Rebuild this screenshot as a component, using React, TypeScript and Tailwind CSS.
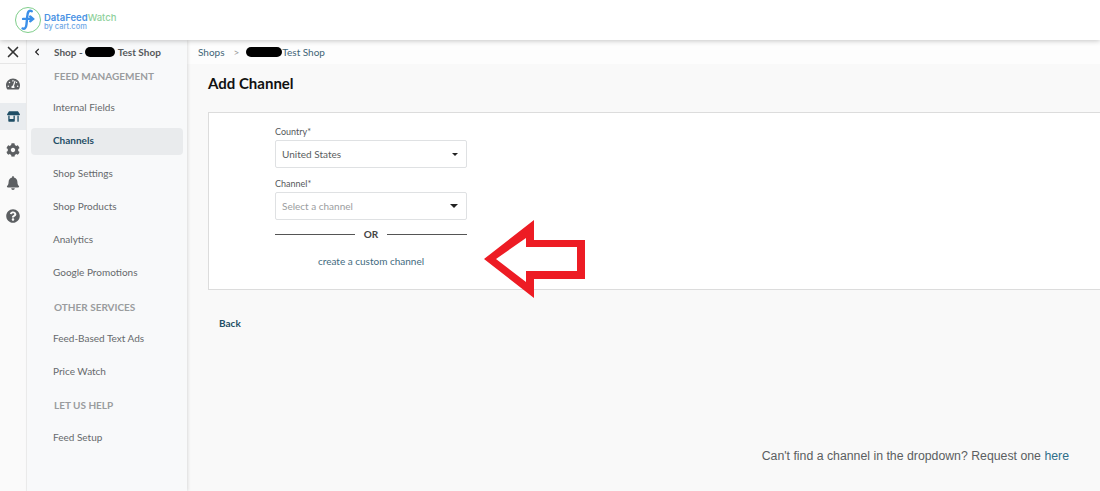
import { FaBell, FaChevronLeft, FaCog, FaQuestionCircle, FaStoreAlt, FaTachometerAlt } from 'react-icons/fa';
import { LuX } from 'react-icons/lu';

const Logo = () => (
  <div className="flex items-center gap-[3px] pl-[15px]">
    <div className="relative w-[26px] h-[26px] rounded-full border border-[#7fce8b] flex items-center justify-center bg-white">
      <svg width="18" height="24" viewBox="0 0 16 22" fill="none" stroke="#3b8fe8" strokeWidth="2.2" strokeLinecap="round">
        <path d="M11.5 3 C8.5 1.5 7.5 4 7.3 8 L6.6 15 C6.3 18.5 4.8 19.5 3 18.7" />
        <path d="M3.5 10 H12" />
        <path d="M10 7.8 L12.6 10 L10 12.2" />
      </svg>
    </div>
    <div className="flex flex-col mt-[3px] font-['Inter',sans-serif] leading-none">
      <span className="text-[9.5px] font-semibold leading-[10px]">
        <span className="text-[#4b93e4]">DataFeed</span>
        <span className="text-[#8fd19c] font-medium">Watch</span>
      </span>
      <span className="text-[7.5px] font-medium leading-[8px] text-[#6fa8e6]">by cart.com</span>
    </div>
  </div>
);

const RailIcon = ({ active, children }: { active?: boolean; children: React.ReactNode }) => (
  <div className="h-[33px] flex items-center">
    <div className={`w-full h-[27px] flex items-center justify-center ${active ? 'bg-[#e9ecef] text-[#1f4e66]' : 'text-[#5c5f62]'}`}>
      {children}
    </div>
  </div>
);

const NavItem = ({ label, active, h = 'h-[33px]' }: { label: string; active?: boolean; h?: string }) => (
  <div
    className={`${h} mx-[4px] pl-[22px] flex items-center text-[10px] rounded ${
      active ? 'bg-[#e9ebed] font-bold text-[#1f4e66] pb-[3px]' : 'text-[#66696c]'
    }`}
  >
    {label}
  </div>
);

const SectionTitle = ({ label, className }: { label: string; className: string }) => (
  <div className={`pl-[27px] flex items-center text-[10px] font-bold text-[#9a9c9e] ${className}`}>{label}</div>
);

const Caret = ({ big }: { big?: boolean }) => (
  <span
    className={`w-0 h-0 border-x-transparent border-t-[#222] ${
      big ? 'border-x-[4px] border-t-[4px]' : 'border-x-[3.5px] border-t-[3.5px]'
    }`}
  />
);

const Select = ({ label, value, placeholder }: { label: string; value: string; placeholder?: boolean }) => (
  <div>
    <div className="text-[9px] leading-[12px] text-[#55585b]">{label}</div>
    <div className="mt-[2px] h-[28px] border border-[#dfe1e3] rounded-[2px] bg-white flex items-center justify-between pl-[6px] pr-[8px]">
      <span className={`text-[10px] ${placeholder ? 'text-[#9b9da0]' : 'text-[#5a5d60]'}`}>{value}</span>
      <Caret big={placeholder} />
    </div>
  </div>
);

const RedArrow = () => (
  <svg className="absolute left-[275px] top-[107px]" width="102" height="80" viewBox="0 0 102 80">
    <path
      fillRule="evenodd"
      fill="#ed1c24"
      d="M0 39 L50 0 L50 20 L101 20 L101 59 L50 59 L50 78 Z M12 39 L42 62 L42 51 L93 51 L93 27 L42 27 L42 18 Z"
    />
  </svg>
);

export default function App() {
  return (
    <div className="w-[1100px] h-[491px] overflow-hidden flex flex-col bg-[#f9f9f9] font-['Lato',sans-serif]">
      {/* top bar */}
      <div className="h-[40px] shrink-0 bg-white flex items-center shadow-[0_1px_5px_rgba(0,0,0,0.22)] relative z-20">
        <Logo />
      </div>

      <div className="flex flex-1 min-h-0">
        {/* icon rail */}
        <div className="w-[27px] shrink-0 bg-[#fafafa] flex flex-col border-r border-[#efefef]">
          <div className="h-[24px] flex items-center justify-center text-[#333] border-b border-[#e6e6e6]">
            <LuX size={18} strokeWidth={2.2} />
          </div>
          <div className="h-[3px]" />
          <RailIcon><FaTachometerAlt size={14} /></RailIcon>
          <RailIcon active><FaStoreAlt size={13} /></RailIcon>
          <RailIcon><FaCog size={14} /></RailIcon>
          <RailIcon><FaBell size={14} /></RailIcon>
          <RailIcon><FaQuestionCircle size={14} /></RailIcon>
        </div>

        {/* shop menu */}
        <div className="w-[160px] shrink-0 bg-[#f8f9fa] shadow-[1px_0_3px_rgba(0,0,0,0.12)] relative z-10">
          <div className="h-[24px] flex items-center text-[10px] font-bold text-[#55585b]">
            <FaChevronLeft size={8} className="ml-[6px] text-[#222]" />
            <span className="ml-[13px]">Shop -</span>
            <span className="ml-[2px] w-[30px] h-[10px] rounded-full bg-black" />
            <span className="ml-[3px]">Test Shop</span>
          </div>
          <SectionTitle label="FEED MANAGEMENT" className="h-[24px]" />
          <NavItem label="Internal Fields" h="h-[38px]" />
          <div className="h-[2px]" />
          <NavItem label="Channels" active h="h-[27px]" />
          <div className="h-[2px]" />
          <NavItem label="Shop Settings" />
          <NavItem label="Shop Products" />
          <NavItem label="Analytics" />
          <NavItem label="Google Promotions" />
          <SectionTitle label="OTHER SERVICES" className="h-[36px]" />
          <NavItem label="Feed-Based Text Ads" h="h-[27px]" />
          <NavItem label="Price Watch" h="h-[38px]" />
          <SectionTitle label="LET US HELP" className="h-[31px]" />
          <NavItem label="Feed Setup" />
        </div>

        {/* main */}
        <div className="flex-1 min-w-0 flex flex-col">
          <div className="h-[24px] bg-[#fdfdfd] pl-[11px] flex items-center text-[10px] text-[#3f6577]">
            <span>Shops</span>
            <span className="ml-[9px] text-[#999]">&gt;</span>
            <span className="ml-[7px] w-[36px] h-[10px] rounded-full bg-black" />
            <span className="ml-[0px]">Test Shop</span>
          </div>

          <h1 className="pl-[21px] mt-[9px] h-[20px] flex items-center text-[15px] font-bold text-[#111]">Add Channel</h1>

          <div className="relative ml-[21px] mt-[19px] h-[178px] bg-white border border-[#dcdcdc] border-r-0 pl-[66px] pt-[13px]">
            <div className="w-[192px]">
              <Select label="Country*" value="United States" />
              <div className="h-[10px]" />
              <Select label="Channel*" value="Select a channel" placeholder />
              <div className="mt-[8px] h-[12px] flex items-center gap-[9px]">
                <span className="flex-1 h-px bg-[#555]" />
                <span className="text-[10px] font-bold text-[#444]">OR</span>
                <span className="flex-1 h-px bg-[#555]" />
              </div>
              <div className="mt-[14px] text-center text-[10px] text-[#3f6b80]">create a custom channel</div>
            </div>
            <RedArrow />
          </div>

          <div className="pl-[32px] mt-[26px] text-[10px] font-bold text-[#1f4e66]">Back</div>

          <div className="mt-[116px] pr-[31px] text-right text-[12.3px] text-[#5b5e61] font-['Liberation_Sans',Arial,sans-serif]">
            Can't find a channel in the dropdown? Request one <span className="text-[#2f6f8a]">here</span>
          </div>
        </div>
      </div>
    </div>
  );
}
